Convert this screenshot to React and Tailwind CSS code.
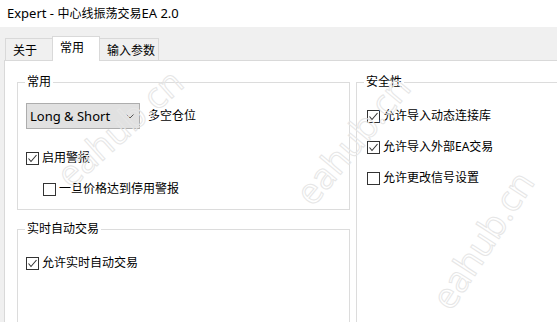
import React from "react";

const FONT = { fontFamily: '"Noto Sans", "Noto Sans CJK SC", sans-serif' };

function Check({ checked }) {
  return (
    <span className="w-[13px] h-[13px] border border-[#333333] bg-white flex items-center justify-center shrink-0">
      {checked && (
        <svg width="11" height="11" viewBox="0 0 11 11">
          <polyline points="1.5,5.5 4,8.5 9.5,2" fill="none" stroke="#333333" strokeWidth="1.1" />
        </svg>
      )}
    </span>
  );
}

function CheckRow({ checked, label, className = "" }) {
  return (
    <div className={"flex items-center h-[16px] gap-[3px] " + className}>
      <Check checked={checked} />
      <span className="leading-[16px]">{label}</span>
    </div>
  );
}

function Group({ title, className = "", children }) {
  return (
    <div className={"shrink-0 border border-[#dcdcdc] " + className}>
      <div className="-mt-[9px] ml-[7px] px-[2px] w-fit bg-white leading-[16px]">{title}</div>
      {children}
    </div>
  );
}

function Watermark({ className }) {
  return (
    <div
      className={
        "absolute text-[36px] leading-none text-transparent [-webkit-text-stroke:1px_#e6e6e6] pointer-events-none select-none " +
        className
      }
      style={{ fontFamily: '"Open Sans", sans-serif' }}
    >
      eahub.cn
    </div>
  );
}

export default function App() {
  return (
    <div className="relative w-[557px] h-[322px] overflow-hidden bg-[#f0f0f0] text-[12px] text-black" style={FONT}>
      <div className="h-[27px] bg-white flex items-center pl-[7px]">
        <span className="text-[13px]">Expert -&nbsp;</span>
        <span>中心线振荡交易</span>
        <span className="text-[13px]">EA 2.0</span>
      </div>
      <div className="h-[33px] flex items-end pl-[5px]">
        <div className="w-[47px] h-[22px] border-l border-t border-[#d9d9d9] pl-[7px] pt-[4px] leading-[16px]">关于</div>
        <div className="relative z-10 -mb-px w-[48px] h-[25px] border-l border-t border-r border-[#d9d9d9] bg-white pl-[7px] pt-[3px] leading-[16px]">常用</div>
        <div className="w-[59px] h-[22px] border-t border-r border-[#d9d9d9] pl-[7px] pt-[4px] leading-[16px]">输入参数</div>
      </div>
      <div className="ml-[4px] h-[262px] overflow-hidden border-l border-t border-[#d9d9d9] bg-white flex pl-[12px] pt-[21px] gap-[6px]">
        <div className="w-[333px] shrink-0 flex flex-col">
          <Group title="常用" className="h-[128px]">
            <div className="pl-[8px] pt-[13px]">
              <div className="flex items-center gap-[8px]">
                <div className="w-[114px] h-[26px] bg-[#e1e1e1] border border-[#adadad] flex items-center pl-[3px] pr-[5px] justify-between">
                  <span className="text-[13px] leading-[16px]">Long &amp; Short</span>
                  <svg width="8" height="5" viewBox="0 0 8 5">
                    <polyline points="0.5,0.5 4,4 7.5,0.5" fill="none" stroke="#555555" strokeWidth="1" />
                  </svg>
                </div>
                <span>多空仓位</span>
              </div>
              <CheckRow checked label="启用警报" className="mt-[21px]" />
              <CheckRow label="一旦价格达到停用警报" className="mt-[15px] ml-[17px]" />
            </div>
          </Group>
          <Group title="实时自动交易" className="mt-[19px] h-[200px]">
            <div className="pl-[8px] pt-[18px]">
              <CheckRow checked label="允许实时自动交易" />
            </div>
          </Group>
        </div>
        <div className="w-[230px] shrink-0 flex flex-col">
          <Group title="安全性" className="h-[300px]">
            <div className="pl-[10px] pt-[18px] flex flex-col gap-[15px]">
              <CheckRow checked label="允许导入动态连接库" />
              <CheckRow checked label="允许导入外部EA交易" />
              <CheckRow label="允许更改信号设置" />
            </div>
          </Group>
        </div>
      </div>
      <Watermark className="left-[42px] top-[110px] -rotate-[42deg]" />
      <Watermark className="left-[275px] top-[122px] -rotate-[50deg]" />
      <Watermark className="left-[405px] top-[222px] -rotate-[57deg]" />
    </div>
  );
}
